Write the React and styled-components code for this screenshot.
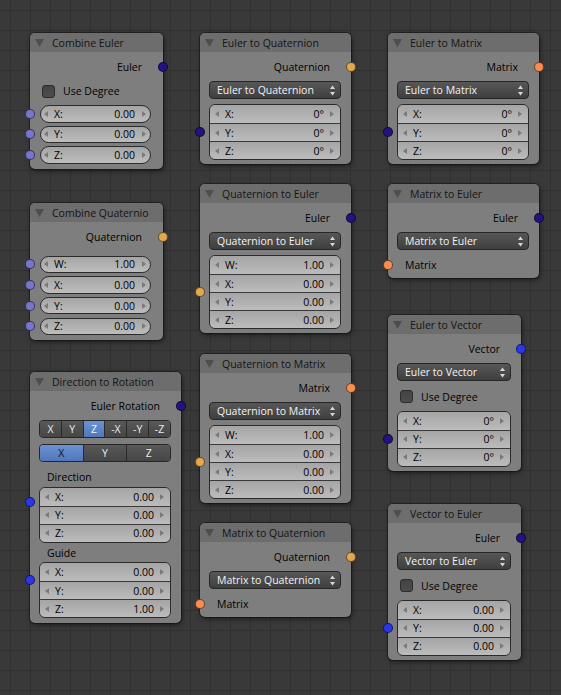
import React from 'react';
import styled, { createGlobalStyle } from 'styled-components';

const GlobalStyle = createGlobalStyle`
  * { box-sizing: border-box; }
  html, body { margin: 0; padding: 0; background: #393939; }
  body {
    font-family: "Open Sans", "Noto Sans", "DejaVu Sans", sans-serif;
    font-size: 10.5px;
  }
`;

const Canvas = styled.div`
  position: relative;
  width: 561px;
  height: 695px;
  overflow: hidden;
  background-color: #393939;
  background-image:
    linear-gradient(to right, #303030 1px, transparent 1px),
    linear-gradient(to bottom, #303030 1px, transparent 1px);
  background-size: 20px 20px;
  background-position: 10px 10px;
`;

const NodeFrame = styled.div`
  position: absolute;
  left: ${p => p.$x}px;
  top: ${p => p.$y}px;
  width: ${p => p.$w}px;
  display: flex;
  flex-direction: column;
  background: #7e7e7e;
  border-radius: 5px;
  box-shadow: 0 0 0 1px rgba(0, 0, 0, 0.35), 1px 2px 5px rgba(0, 0, 0, 0.5);
`;

const Header = styled.div`
  height: 19px;
  display: flex;
  align-items: center;
  gap: 8px;
  padding-left: 5px;
  background: #6d6d6d;
  border-radius: 5px 5px 0 0;
  color: #141414;
  white-space: nowrap;
  overflow: hidden;
`;

const Collapse = styled.svg`
  flex: none;
  display: block;
`;

const Body = styled.div`
  display: flex;
  flex-direction: column;
  padding: 3.5px 10px ${p => p.$pb}px 9px;
`;

const OutRow = styled.div`
  position: relative;
  height: 22px;
  display: flex;
  align-items: center;
  justify-content: flex-end;
  padding-right: 11px;
  color: #000;
`;

const InRow = styled.div`
  position: relative;
  height: 22px;
  margin-top: ${p => p.$mt || 0}px;
  display: flex;
  align-items: center;
  padding-left: 8px;
  color: #000;
`;

const Socket = styled.span`
  position: absolute;
  top: 50%;
  width: 10px;
  height: 10px;
  margin-top: -5px;
  border-radius: 50%;
  background: ${p => p.$color};
  border: 1px solid rgba(0, 0, 0, 0.55);
  ${p => (p.$out ? 'right: -15px;' : 'left: -14px;')}
`;

const Dropdown = styled.div`
  height: 18px;
  margin-top: 3.5px;
  display: flex;
  align-items: center;
  justify-content: space-between;
  padding: 0 5px 0 7px;
  border: 1px solid #262626;
  border-radius: 4px;
  background: linear-gradient(#575757, #3f3f3f);
  color: #f2f2f2;
  white-space: nowrap;
`;

const UpDown = styled.svg`
  flex: none;
  display: block;
`;

const CheckRow = styled.div`
  height: 22px;
  margin-top: ${p => p.$mt}px;
  display: flex;
  align-items: center;
  gap: 8px;
  padding-left: 3px;
  color: #000;
`;

const CheckBox = styled.span`
  width: 13px;
  height: 13px;
  flex: none;
  border-radius: 3px;
  border: 1px solid #2c2c2c;
  background: linear-gradient(#434343, #4d4d4d);
`;

const PillStack = styled.div`
  display: flex;
  flex-direction: column;
  gap: 3.2px;
  margin-top: ${p => p.$mt}px;
`;

const SockBlock = styled.div`
  position: relative;
  display: flex;
  flex-direction: column;
  margin-top: ${p => p.$mt || 0}px;
`;

const Pill = styled.div`
  height: 17.5px;
  margin: 0 2px 0 1px;
  display: flex;
  align-items: center;
  padding: 0 4px 0 3px;
  border: 1px solid #2b2b2b;
  border-radius: 9px;
  background: linear-gradient(#a5a5a5, #bdbdbd);
  color: #000;
`;

const VecBox = styled.div`
  display: flex;
  flex-direction: column;
  border: 1px solid #2b2b2b;
  border-radius: 6px;
  overflow: hidden;
`;

const VecRow = styled.div`
  height: 18px;
  display: flex;
  align-items: center;
  padding: 0 6px 0 5px;
  background: linear-gradient(#a5a5a5, #bcbcbc);
  color: #000;
  & + & {
    border-top: 1px solid #3a3a3a;
  }
`;

const FieldLabel = styled.span`
  margin-left: 6px;
`;

const FieldValue = styled.span`
  margin-left: auto;
  margin-right: ${p => p.$gap}px;
`;

const NumArrow = styled.svg`
  flex: none;
  display: block;
`;

const SubLabel = styled.div`
  height: 19px;
  margin-top: ${p => p.$mt}px;
  display: flex;
  align-items: center;
  padding-left: 8px;
  color: #000;
`;

const ToggleGroup = styled.div`
  height: 18px;
  margin-top: ${p => p.$mt}px;
  display: flex;
  border: 1px solid #262626;
  border-radius: 4px;
  overflow: hidden;
`;

const Toggle = styled.div`
  flex: 1;
  display: flex;
  align-items: center;
  justify-content: center;
  background: ${p => (p.$on ? 'linear-gradient(#6b93d3, #4f77ba)' : 'linear-gradient(#585858, #464646)')};
  color: ${p => (p.$on ? p.$onText : '#ececec')};
  & + & {
    border-left: 1px solid #2a2a2a;
  }
`;

const C = {
  euler: '#22137e',
  quat: '#e3a84f',
  matrix: '#fa8d50',
  vector: '#2b37e6',
  float: '#7676ca',
};

const Arrow = ({ dir }) => (
  <NumArrow width="4" height="6" viewBox="0 0 4 6">
    <polygon points={dir === 'l' ? '4,0 0,3 4,6' : '0,0 4,3 0,6'} fill="#7a7a7a" />
  </NumArrow>
);

const FieldContent = ({ label, value, gap }) => (
  <>
    <Arrow dir="l" />
    <FieldLabel>{label}:</FieldLabel>
    <FieldValue $gap={gap}>{value}</FieldValue>
    <Arrow dir="r" />
  </>
);

const renderRow = (r, i) => {
  switch (r.t) {
    case 'out':
      return (
        <OutRow key={i}>
          {r.label}
          <Socket $out $color={C[r.sock]} />
        </OutRow>
      );
    case 'in':
      return (
        <InRow key={i} $mt={r.mt}>
          {r.label}
          <Socket $color={C[r.sock]} />
        </InRow>
      );
    case 'drop':
      return (
        <Dropdown key={i}>
          <span>{r.label}</span>
          <UpDown width="5" height="11" viewBox="0 0 5 11">
            <polygon points="0,4 2.5,0.5 5,4" fill="#d8d8d8" />
            <polygon points="0,7 2.5,10.5 5,7" fill="#d8d8d8" />
          </UpDown>
        </Dropdown>
      );
    case 'check':
      return (
        <CheckRow key={i} $mt={r.mt}>
          <CheckBox />
          {r.label}
        </CheckRow>
      );
    case 'pills':
      return (
        <PillStack key={i} $mt={r.mt}>
          {r.items.map(([l, v]) => (
            <SockBlock key={l}>
              <Pill>
                <FieldContent label={l} value={v} gap={7} />
              </Pill>
              <Socket $color={C[r.sock]} />
            </SockBlock>
          ))}
        </PillStack>
      );
    case 'vec':
      return (
        <SockBlock key={i} $mt={r.mt}>
          {r.label && <SubLabel $mt={r.lmt || 0}>{r.label}</SubLabel>}
          <VecBox>
            {r.items.map(([l, v]) => (
              <VecRow key={l}>
                <FieldContent label={l} value={v} gap={6} />
              </VecRow>
            ))}
          </VecBox>
          <Socket $color={C[r.sock]} />
        </SockBlock>
      );
    case 'toggles':
      return (
        <ToggleGroup key={i} $mt={r.mt}>
          {r.items.map((l, k) => (
            <Toggle key={l} $on={k === r.on} $onText={r.onText}>
              {l}
            </Toggle>
          ))}
        </ToggleGroup>
      );
    default:
      return null;
  }
};

const Node = ({ n }) => (
  <NodeFrame $x={n.x} $y={n.y} $w={n.w}>
    <Header>
      <Collapse width="9" height="8" viewBox="0 0 9 8">
        <polygon points="0,0 9,0 4.5,8" fill="#4e4e4e" />
      </Collapse>
      <span>{n.title}</span>
    </Header>
    <Body $pb={n.pb}>{n.rows.map(renderRow)}</Body>
  </NodeFrame>
);

const xyz = v => [['X', v], ['Y', v], ['Z', v]];
const wxyz = [['W', '1.00'], ['X', '0.00'], ['Y', '0.00'], ['Z', '0.00']];

const nodes = [
  {
    title: 'Combine Euler', x: 30, y: 33, w: 133, pb: 5,
    rows: [
      { t: 'out', label: 'Euler', sock: 'euler' },
      { t: 'check', label: 'Use Degree', mt: 2.5 },
      { t: 'pills', mt: 3, sock: 'float', items: xyz('0.00') },
    ],
  },
  {
    title: 'Combine Quaternio', x: 30, y: 203, w: 133, pb: 5,
    rows: [
      { t: 'out', label: 'Quaternion', sock: 'quat' },
      { t: 'pills', mt: 8, sock: 'float', items: wxyz },
    ],
  },
  {
    title: 'Direction to Rotation', x: 30, y: 372, w: 151, pb: 5,
    rows: [
      { t: 'out', label: 'Euler Rotation', sock: 'euler' },
      { t: 'toggles', mt: 3.2, items: ['X', 'Y', 'Z', '-X', '-Y', '-Z'], on: 2, onText: '#f4f4f4' },
      { t: 'toggles', mt: 6, items: ['X', 'Y', 'Z'], on: 0, onText: '#101010' },
      { t: 'vec', label: 'Direction', lmt: 6, sock: 'vector', items: xyz('0.00') },
      { t: 'vec', label: 'Guide', lmt: 0.5, sock: 'vector', items: [['X', '0.00'], ['Y', '0.00'], ['Z', '1.00']] },
    ],
  },
  {
    title: 'Euler to Quaternion', x: 200, y: 33, w: 151, pb: 4,
    rows: [
      { t: 'out', label: 'Quaternion', sock: 'quat' },
      { t: 'drop', label: 'Euler to Quaternion' },
      { t: 'vec', mt: 5, sock: 'euler', items: xyz('0°') },
    ],
  },
  {
    title: 'Quaternion to Euler', x: 200, y: 184, w: 151, pb: 4,
    rows: [
      { t: 'out', label: 'Euler', sock: 'euler' },
      { t: 'drop', label: 'Quaternion to Euler' },
      { t: 'vec', mt: 5, sock: 'quat', items: wxyz },
    ],
  },
  {
    title: 'Quaternion to Matrix', x: 200, y: 354, w: 151, pb: 4,
    rows: [
      { t: 'out', label: 'Matrix', sock: 'matrix' },
      { t: 'drop', label: 'Quaternion to Matrix' },
      { t: 'vec', mt: 5, sock: 'quat', items: wxyz },
    ],
  },
  {
    title: 'Matrix to Quaternion', x: 200, y: 523, w: 151, pb: 2.5,
    rows: [
      { t: 'out', label: 'Quaternion', sock: 'quat' },
      { t: 'drop', label: 'Matrix to Quaternion' },
      { t: 'in', label: 'Matrix', sock: 'matrix', mt: 3.5 },
    ],
  },
  {
    title: 'Euler to Matrix', x: 388, y: 33, w: 151, pb: 4,
    rows: [
      { t: 'out', label: 'Matrix', sock: 'matrix' },
      { t: 'drop', label: 'Euler to Matrix' },
      { t: 'vec', mt: 5, sock: 'euler', items: xyz('0°') },
    ],
  },
  {
    title: 'Matrix to Euler', x: 388, y: 184, w: 151, pb: 2.5,
    rows: [
      { t: 'out', label: 'Euler', sock: 'euler' },
      { t: 'drop', label: 'Matrix to Euler' },
      { t: 'in', label: 'Matrix', sock: 'matrix', mt: 3.5 },
    ],
  },
  {
    title: 'Euler to Vector', x: 388, y: 315, w: 133, pb: 4,
    rows: [
      { t: 'out', label: 'Vector', sock: 'vector' },
      { t: 'drop', label: 'Euler to Vector' },
      { t: 'check', label: 'Use Degree', mt: 4.5 },
      { t: 'vec', mt: 3, sock: 'euler', items: xyz('0°') },
    ],
  },
  {
    title: 'Vector to Euler', x: 388, y: 504, w: 133, pb: 4,
    rows: [
      { t: 'out', label: 'Euler', sock: 'euler' },
      { t: 'drop', label: 'Vector to Euler' },
      { t: 'check', label: 'Use Degree', mt: 4.5 },
      { t: 'vec', mt: 3, sock: 'vector', items: xyz('0.00') },
    ],
  },
];

export default function App() {
  return (
    <>
      <GlobalStyle />
      <Canvas>
        {nodes.map(n => (
          <Node key={n.title} n={n} />
        ))}
      </Canvas>
    </>
  );
}
